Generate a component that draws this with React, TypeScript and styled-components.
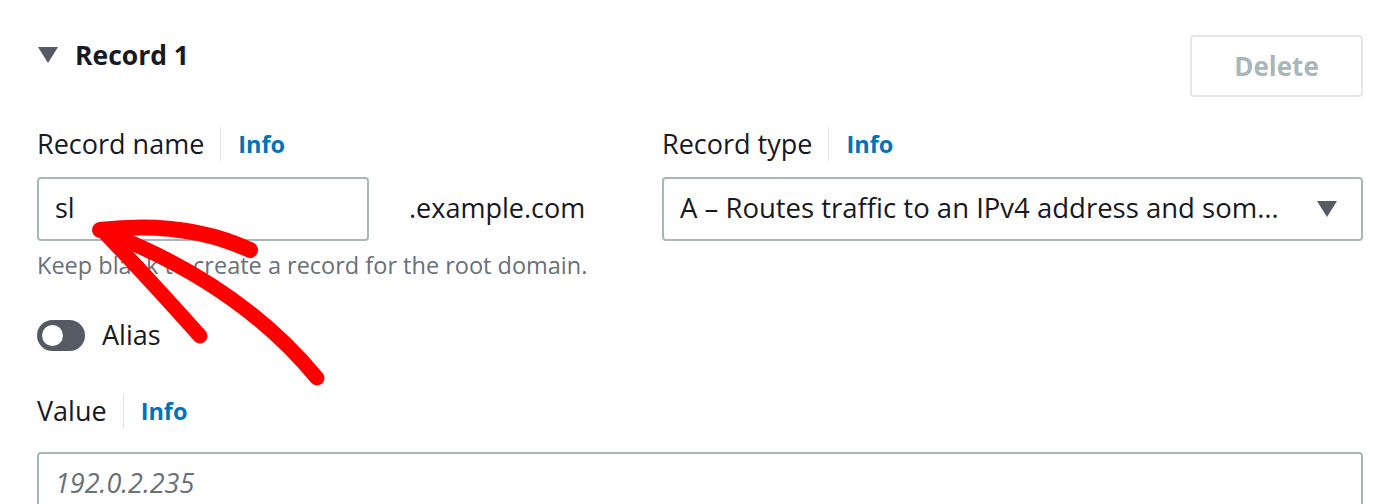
import React from "react";
import styled, { createGlobalStyle } from "styled-components";

const Global = createGlobalStyle`
  html, body { margin: 0; padding: 0; background: #ffffff; }
  body { font-family: "Open Sans", "Noto Sans", sans-serif; color: #16191f; }
`;

const Page = styled.div`
  position: relative;
  width: 1400px;
  height: 504px;
  overflow: hidden;
  box-sizing: border-box;
  padding: 35px 37px 0 37px;
`;

const Header = styled.div`
  display: flex;
  justify-content: space-between;
  align-items: flex-start;
`;

const Title = styled.div`
  display: flex;
  align-items: center;
  gap: 17px;
  margin-top: 2px;
  font-size: 26.5px;
  font-weight: 700;
  line-height: 36px;
  padding-left: 1px;
`;

const Caret = styled.span`
  display: inline-block;
  width: 0;
  height: 0;
  border-left: 10px solid transparent;
  border-right: 10px solid transparent;
  border-top: 16px solid #545b64;
`;

const DeleteButton = styled.button`
  width: 173px;
  height: 62px;
  box-sizing: border-box;
  border: 2px solid #e3e7e8;
  border-radius: 4px;
  background: #ffffff;
  color: #aab7b8;
  font-family: "Open Sans", "Noto Sans", sans-serif;
  font-size: 26px;
  font-weight: 700;
  padding: 0;
`;

const FieldsRow = styled.div`
  display: grid;
  grid-template-columns: 625px 701px;
  margin-top: 29px;
`;

const Field = styled.div<{ $mt?: number }>`
  display: flex;
  flex-direction: column;
  margin-top: ${(p) => p.$mt ?? 0}px;
`;

const LabelRow = styled.div`
  display: flex;
  align-items: center;
  height: 36px;
`;

const LabelText = styled.span`
  font-size: 27px;
  line-height: 36px;
  color: #16191f;
`;

const Divider = styled.span<{ $gap: number }>`
  width: 1px;
  height: 34px;
  background: #e1e4e6;
  margin: 0 17px 0 ${(p) => p.$gap}px;
`;

const InfoLink = styled.span`
  font-size: 23.5px;
  font-weight: 700;
  color: #0073bb;
  line-height: 36px;
`;

const InputLine = styled.div<{ $mt: number }>`
  display: flex;
  align-items: center;
  margin-top: ${(p) => p.$mt}px;
`;

const TextBox = styled.div<{ $w?: string }>`
  box-sizing: border-box;
  width: ${(p) => p.$w ?? "100%"};
  height: 64px;
  border: 2px solid #aab7b8;
  border-radius: 4px;
  display: flex;
  align-items: center;
  padding: 0 16px 3px 16px;
  font-size: 27px;
  color: #16191f;
  background: #fff;
`;

const Placeholder = styled.span`
  font-style: italic;
  color: #687078;
`;

const Suffix = styled.span`
  margin-left: 40px;
  margin-bottom: 3px;
  font-size: 27px;
  color: #16191f;
`;

const SelectBox = styled(TextBox)`
  justify-content: space-between;
  padding-right: 24px;
`;

const SelectText = styled.span`
  white-space: nowrap;
  overflow: hidden;
  font-size: 27.5px;
`;

const SelectCaret = styled(Caret)`
  flex-shrink: 0;
  margin-left: 20px;
  margin-top: 3px;
`;

const Hint = styled.div`
  margin-top: 9px;
  font-size: 23.5px;
  line-height: 30px;
  color: #687078;
`;

const ToggleRow = styled.div`
  display: flex;
  align-items: center;
  gap: 17px;
  margin-top: 37px;
`;

const Toggle = styled.span`
  position: relative;
  width: 48px;
  height: 31px;
  border-radius: 16px;
  background: #545b64;
  display: inline-block;
`;

const Knob = styled.span`
  position: absolute;
  left: 5px;
  top: 5px;
  width: 21px;
  height: 21px;
  border-radius: 50%;
  background: #ffffff;
`;

const AliasLabel = styled.span`
  font-size: 27px;
  line-height: 36px;
`;

const Overlay = styled.svg`
  position: absolute;
  left: 0;
  top: 0;
  pointer-events: none;
`;

export default function App() {
  return (
    <>
      <Global />
      <Page>
        <Header>
          <Title>
            <Caret />
            Record 1
          </Title>
          <DeleteButton>Delete</DeleteButton>
        </Header>

        <FieldsRow>
          <Field>
            <LabelRow>
              <LabelText>Record name</LabelText>
              <Divider $gap={16} />
              <InfoLink>Info</InfoLink>
            </LabelRow>
            <InputLine $mt={15}>
              <TextBox $w="332px">sl</TextBox>
              <Suffix>.example.com</Suffix>
            </InputLine>
          </Field>
          <Field>
            <LabelRow>
              <LabelText>Record type</LabelText>
              <Divider $gap={16} />
              <InfoLink>Info</InfoLink>
            </LabelRow>
            <InputLine $mt={15}>
              <SelectBox>
                <SelectText>A – Routes traffic to an IPv4 address and som…</SelectText>
                <SelectCaret />
              </SelectBox>
            </InputLine>
          </Field>
        </FieldsRow>

        <Hint>Keep blank to create a record for the root domain.</Hint>

        <ToggleRow>
          <Toggle>
            <Knob />
          </Toggle>
          <AliasLabel>Alias</AliasLabel>
        </ToggleRow>

        <Field $mt={40}>
          <LabelRow>
            <LabelText>Value</LabelText>
            <Divider $gap={16} />
            <InfoLink>Info</InfoLink>
          </LabelRow>
          <InputLine $mt={23}>
            <TextBox>
              <Placeholder>192.0.2.235</Placeholder>
            </TextBox>
          </InputLine>
        </Field>

        <Overlay width="1400" height="504" viewBox="0 0 1400 504">
          <g fill="none" stroke="#ff0000" strokeLinecap="round" strokeLinejoin="round">
            <path d="M110 234 Q 240 285 317 378" strokeWidth="15" />
            <path d="M100 230 Q 185 220 250 250" strokeWidth="16" />
            <path d="M106 234 Q 150 280 200 336" strokeWidth="15" />
          </g>
        </Overlay>
      </Page>
    </>
  );
}
